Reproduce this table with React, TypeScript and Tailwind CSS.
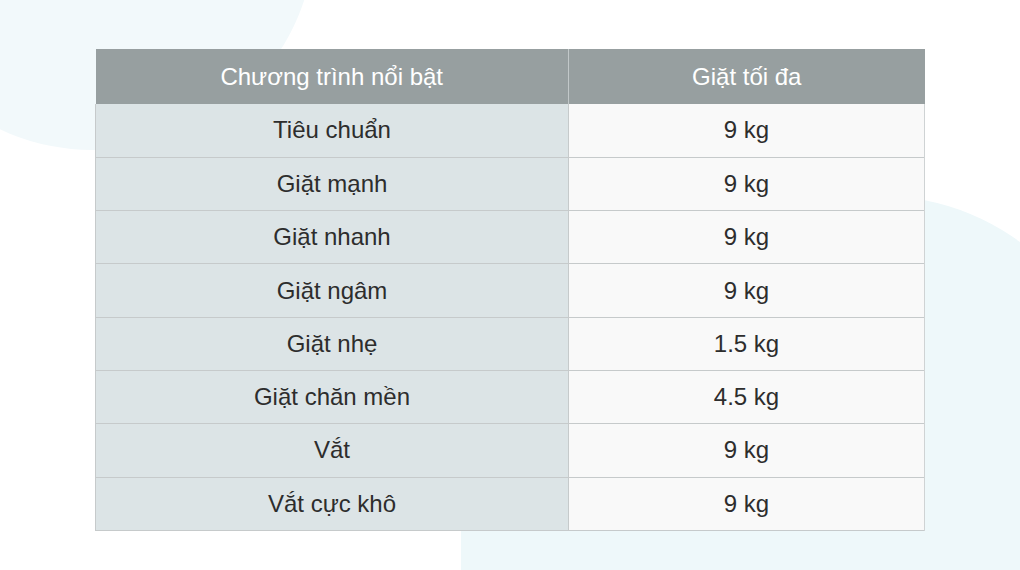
import React from 'react';

const rows: [string, string][] = [
  ['Tiêu chuẩn', '9 kg'],
  ['Giặt mạnh', '9 kg'],
  ['Giặt nhanh', '9 kg'],
  ['Giặt ngâm', '9 kg'],
  ['Giặt nhẹ', '1.5 kg'],
  ['Giặt chăn mền', '4.5 kg'],
  ['Vắt', '9 kg'],
  ['Vắt cực khô', '9 kg'],
];

const App: React.FC = () => {
  return (
    <div
      className="relative w-[1020px] h-[570px] overflow-hidden bg-white"
      style={{ fontFamily: '"Liberation Sans", Arial, sans-serif' }}
    >
      {/* Background shapes */}
      <div className="absolute -left-[125px] -top-[285px] w-[440px] h-[435px] rounded-full bg-[#f2f9fb]" />
      <div className="absolute left-[461px] top-[196px] w-[655px] h-[500px] rounded-[22px] rounded-tr-[236px] bg-[#eef8fa]" />

      {/* Table */}
      <div className="relative pt-[49px] pl-[95px]">
        <table className="w-[830px] border-collapse text-[24px] text-[#2d2d2d]">
          <thead>
            <tr className="h-[55px] bg-[#979fa0] text-white">
              <th className="w-[473px] font-normal border-r border-[#c2c8c9]">Chương trình nổi bật</th>
              <th className="font-normal">Giặt tối đa</th>
            </tr>
          </thead>
          <tbody>
            {rows.map(([name, weight], i) => (
              <tr key={i} className="h-[53.3px] border-b border-[#c6cacb]">
                <td className="bg-[#dce4e6] text-center border-l border-[#c6cacb] border-r">{name}</td>
                <td className="bg-[#f9f9f9] text-center border-r border-[#cfd3d4]">{weight}</td>
              </tr>
            ))}
          </tbody>
        </table>
      </div>
    </div>
  );
};

export default App;
